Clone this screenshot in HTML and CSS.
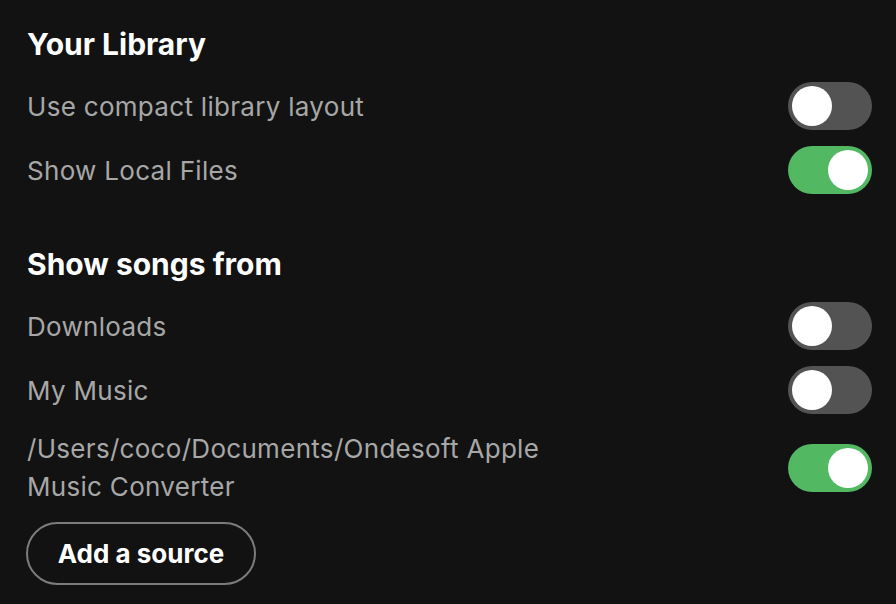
FILE: index.html
```html
<!DOCTYPE html>
<html lang="en">
<head>
  <meta charset="UTF-8">
  <title>Library settings</title>
  <link rel="stylesheet" href="styles.css">
</head>
<body>

<div class="secao">
  <h2>Your Library</h2>
  <div class="linha">
    <span class="rotulo">Use compact library layout</span>
    <span class="chave"><span class="bolinha"></span></span>
  </div>
  <div class="linha">
    <span class="rotulo">Show Local Files</span>
    <span class="chave ligada"><span class="bolinha"></span></span>
  </div>
</div>

<div class="secao segunda">
  <h2>Show songs from</h2>
  <div class="linha">
    <span class="rotulo">Downloads</span>
    <span class="chave"><span class="bolinha"></span></span>
  </div>
  <div class="linha">
    <span class="rotulo">My Music</span>
    <span class="chave"><span class="bolinha"></span></span>
  </div>
  <div class="linha">
    <span class="rotulo caminho">/Users/coco/Documents/Ondesoft Apple Music Converter</span>
    <span class="chave ligada"><span class="bolinha"></span></span>
  </div>
  <button class="botao-fonte">Add a source</button>
</div>

</body>
</html>
```

FILE: styles.css
```css
html, body {
  background: #121212;
}
body {
  margin: 0;
  padding: 26px 24px 0 27px;
  font-family: Inter, "Noto Sans", sans-serif;
  color: #a7a7a7;
}
h2 {
  margin: 0 0 12px 0;
  font-size: 30px;
  line-height: 36px;
  font-weight: 700;
  color: white;
}
.segunda {
  margin-top: 44px;
}
.linha {
  display: flex;
  align-items: center;
  justify-content: space-between;
  min-height: 48px;
  padding: 8px 0;
}
.rotulo {
  font-size: 26px;
  line-height: 38px;
  letter-spacing: 0.3px;
  padding-top: 1px;
}
.caminho {
  max-width: 570px;
  padding-top: 0;
}
.chave {
  flex-shrink: 0;
  width: 84px;
  height: 48px;
  border-radius: 24px;
  background: #535353;
  padding: 4px;
  box-sizing: border-box;
  display: flex;
}
.chave.ligada {
  background: #53b862;
  justify-content: flex-end;
}
.bolinha {
  width: 40px;
  height: 40px;
  border-radius: 50%;
  background: white;
}
.botao-fonte {
  margin-top: 8px;
  width: 230px;
  height: 63px;
  margin-left: -1px;
  border: 2px solid #7c7c7c;
  border-radius: 32px;
  background: transparent;
  color: white;
  font-family: inherit;
  font-size: 26px;
  font-weight: 700;
  cursor: pointer;
}
```
